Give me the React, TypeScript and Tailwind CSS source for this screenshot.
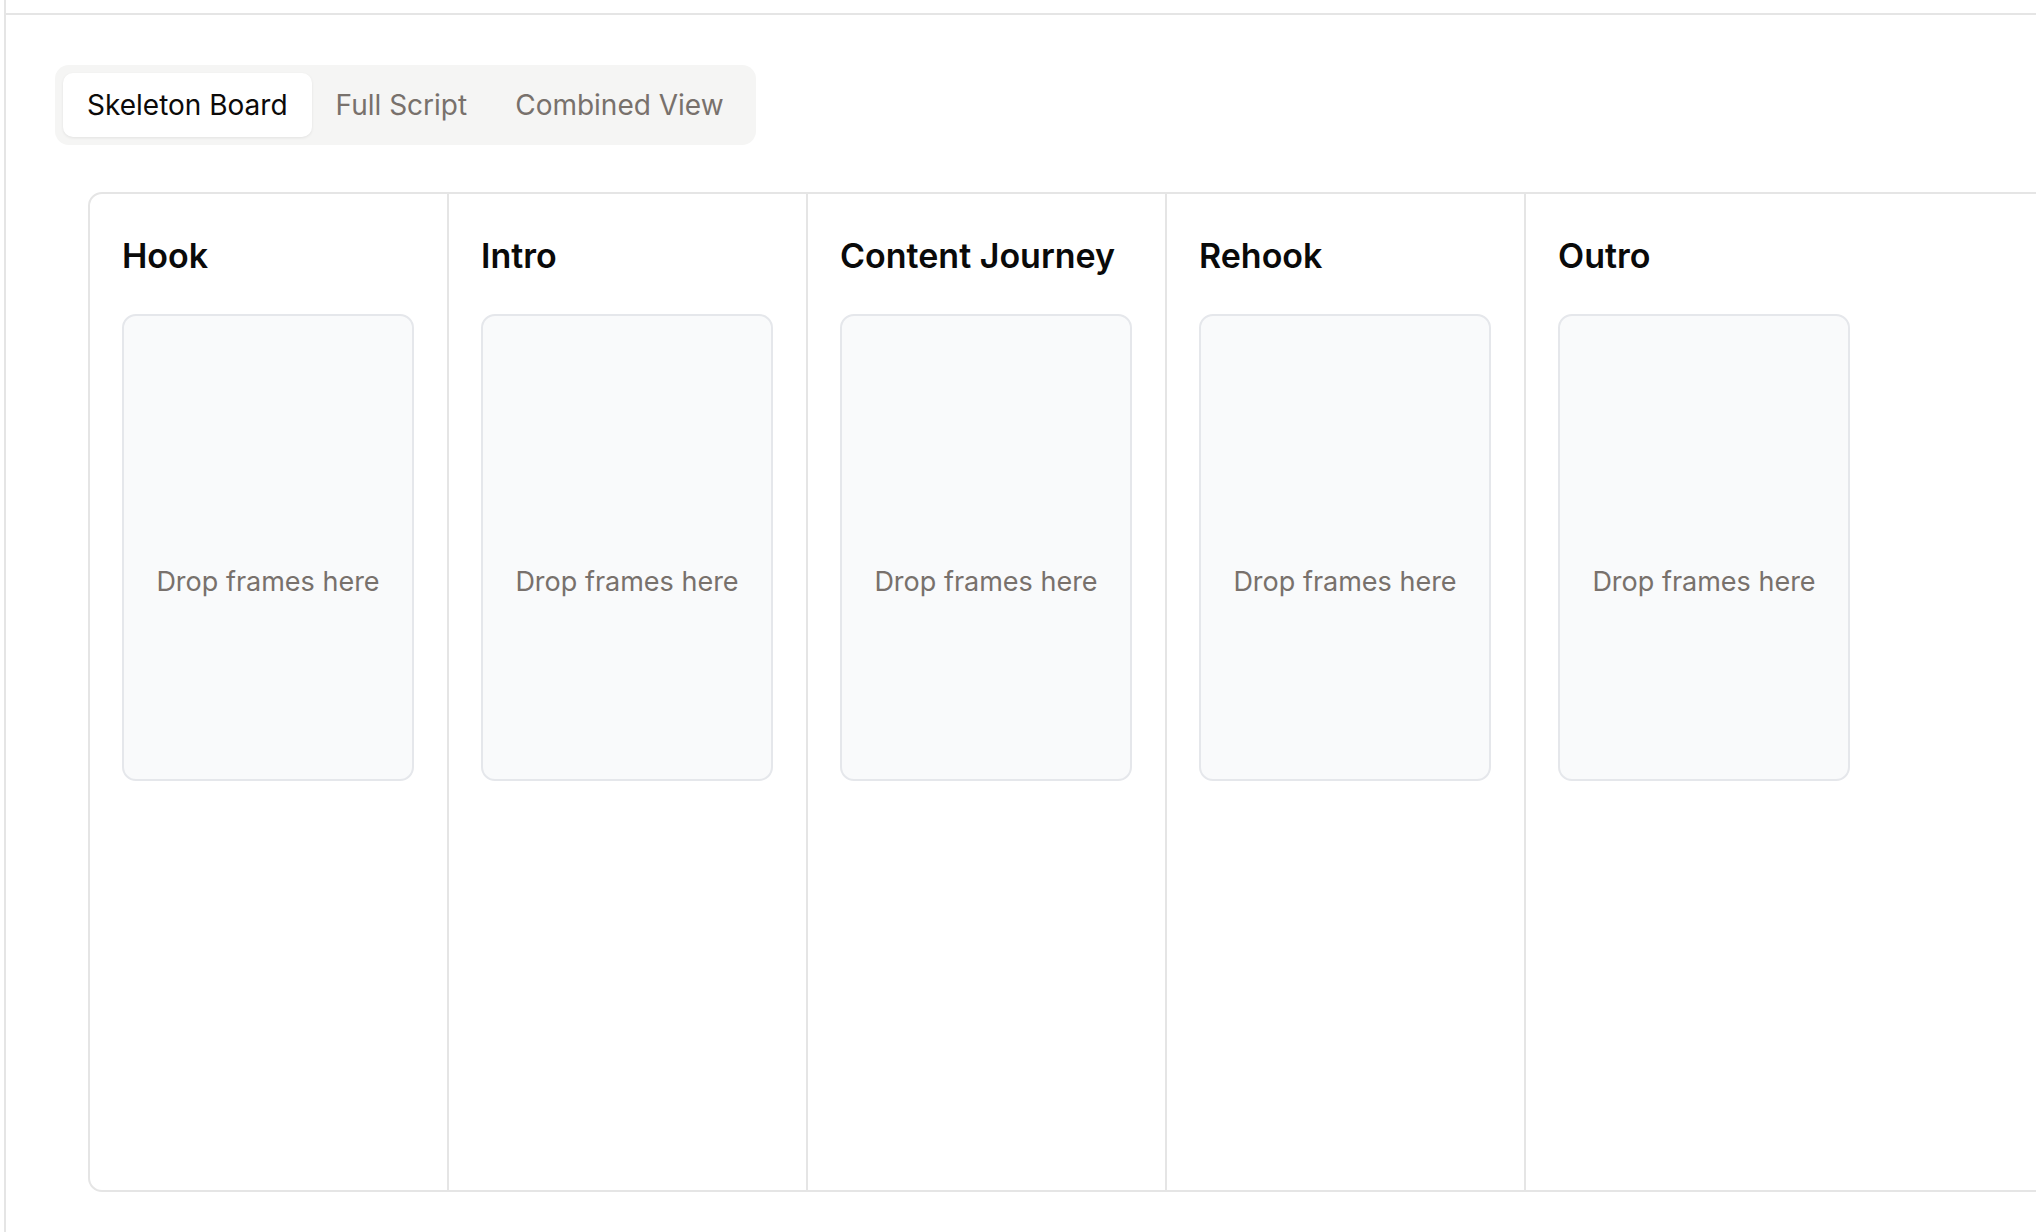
import React from "react";

const columns = ["Hook", "Intro", "Content Journey", "Rehook", "Outro"];

export default function App() {
  return (
    <div
      className="flex h-screen w-full overflow-hidden bg-white"
      style={{ fontFamily: "Inter, 'Noto Sans', sans-serif" }}
    >
      <div className="w-[4px] shrink-0" />
      <div className="flex min-w-0 flex-1 flex-col border-l-2 border-[#e5e5e5]">
        <div className="h-[15px] shrink-0 border-b-2 border-[#e5e5e5]" />
        <div className="flex min-h-0 flex-1 flex-col pl-[49px] pt-[50px]">
          <div className="flex w-fit items-center rounded-[14px] bg-[#f5f5f4] p-[8px]">
            <button className="h-[64px] rounded-[10px] bg-white px-[24px] text-[28px] text-[#0c0a09] shadow-[0_1px_3px_rgba(0,0,0,0.08)]">
              Skeleton Board
            </button>
            <button className="h-[64px] px-[24px] text-[28px] text-[#78716c]">
              Full Script
            </button>
            <button className="h-[64px] px-[24px] text-[28px] text-[#78716c]">
              Combined View
            </button>
          </div>
          <div className="ml-[33px] mt-[47px] flex h-[1000px] w-[2200px] shrink-0 rounded-[14px] border-2 border-[#e5e5e5]">
            {columns.map((title, i) => (
              <div
                key={title}
                className={
                  i < columns.length - 1
                    ? "w-[359px] shrink-0 border-r-2 border-[#e5e5e5] px-[32px] pt-[38px]"
                    : "w-[359px] shrink-0 px-[32px] pt-[38px]"
                }
              >
                <h2 className="text-[34px] font-semibold leading-[48px] text-[#0a0a0a]">
                  {title}
                </h2>
                <div className="mt-[34px] flex h-[467px] w-[292px] flex-col items-center justify-center rounded-[14px] border-2 border-[#e5e7eb] bg-[#f9fafb] pt-[70px]">
                  <span className="text-[27px] text-[#78716c]">Drop frames here</span>
                </div>
              </div>
            ))}
          </div>
        </div>
      </div>
    </div>
  );
}
